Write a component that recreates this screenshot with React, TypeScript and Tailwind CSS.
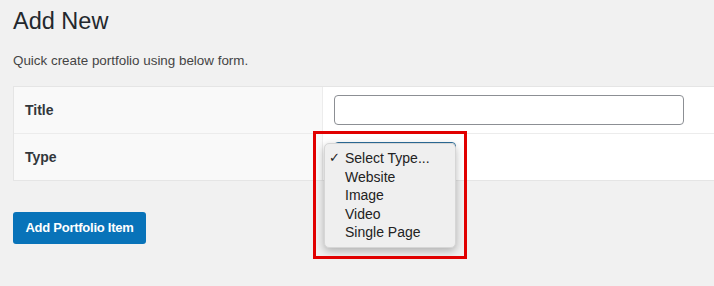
export default function App() {
  const options = ['Select Type...', 'Website', 'Image', 'Video', 'Single Page'];

  return (
    <div className="relative w-[714px] min-h-[286px] overflow-hidden bg-[#f1f1f1] pl-[13px] pt-[6px] font-['Liberation_Sans',Arial,sans-serif] antialiased">
      <h1 className="text-[23.5px] leading-[30px] font-normal text-[#23282d]">Add New</h1>
      <p className="mt-[16px] text-[13.4px] leading-[18px] text-[#444]">Quick create portfolio using below form.</p>

      {/* Form table */}
      <div className="mt-[16px] grid grid-cols-[309px_1fr] border-y border-l border-[#e5e5e5]">
        <div className="flex h-[46px] items-center border-r border-[#ececec] bg-[#f9f9f9] pl-[11px] text-[14px] font-bold text-[#32373c]">
          Title
        </div>
        <div className="flex h-[46px] items-center bg-white pl-[11px]">
          <input
            type="text"
            className="h-[30px] w-[350px] rounded-[4px] border border-[#8c8f94] bg-white outline-none"
          />
        </div>
        <div className="flex h-[47px] items-center border-r border-t border-[#ececec] bg-[#f9f9f9] pl-[11px] text-[14px] font-bold text-[#32373c]">
          Type
        </div>
        <div className="flex h-[47px] items-center border-t border-[#ececec] bg-white pl-[11px]">
          <div className="h-[30px] w-[122px] rounded-[4px] border border-[#2c6e9a] bg-white" />
        </div>
      </div>

      <button className="mt-[31px] h-[32px] w-[133px] rounded-[3px] bg-[#0873b9] text-[13px] font-semibold tracking-[-0.25px] text-white">
        Add Portfolio Item
      </button>

      {/* Open select menu */}
      <div className="absolute left-[324px] top-[143px] w-[132px] rounded-[5px] border border-[#d6d6d6] bg-[#efefef] py-[5px] shadow-[0_3px_9px_rgba(0,0,0,0.28)]">
        {options.map((o, i) => (
          <div key={o} className="relative h-[18.5px] pl-[20px] text-[14px] leading-[18px] text-[#222]">
            {i === 0 && (
              <span className="absolute left-[4px] top-0 font-['DejaVu_Sans',sans-serif] text-[13px] font-bold">✓</span>
            )}
            {o}
          </div>
        ))}
      </div>

      {/* Highlight box */}
      <div className="pointer-events-none absolute left-[313px] top-[131px] h-[128px] w-[154px] border-[3px] border-[#e10000]" />
    </div>
  );
}
